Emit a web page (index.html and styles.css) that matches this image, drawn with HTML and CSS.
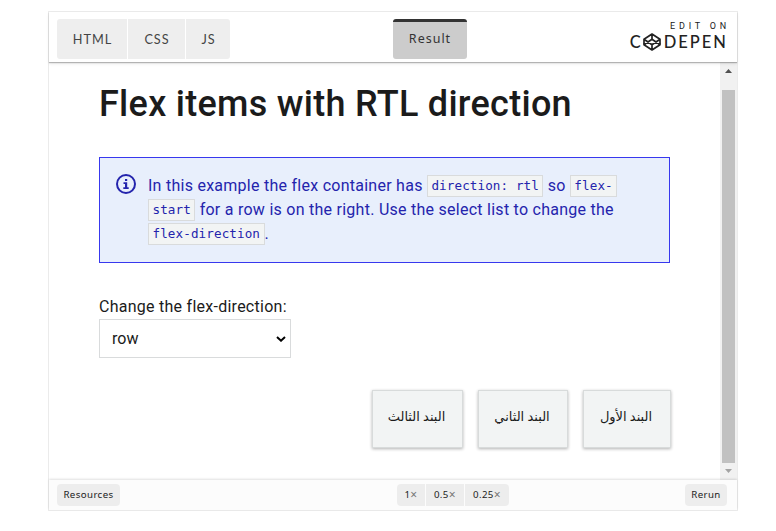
FILE: index.html
```html
<!DOCTYPE html>
<html lang="en">
<head>
<meta charset="utf-8">
<title>Flex items with RTL direction</title>
<link rel="stylesheet" href="styles.css">
</head>
<body>
<div class="embed">
  <header class="header">
    <nav class="tabs">
      <button class="tab html">HTML</button><button class="tab css">CSS</button><button class="tab js">JS</button>
    </nav>
    <button class="result">Result</button>
    <a class="brand">
      <span class="edit">EDIT ON</span>
      <span class="logo"><span>C</span><svg class="mark" viewBox="0 0 18 18" fill="none" stroke="#222" stroke-width="1.7" stroke-linejoin="round"><path d="M9 1L17 6.2V11.8L9 17L1 11.8V6.2ZM1 6.2L9 11.8L17 6.2M1 11.8L9 6.2L17 11.8M9 1V6.2M9 11.8V17"/></svg><span class="pen">DEPEN</span></span>
    </a>
  </header>
  <div class="view">
    <main class="page">
      <h1>Flex items with RTL direction</h1>
      <div class="note">
        <svg class="info" viewBox="0 0 20 20"><circle cx="10" cy="10" r="9" fill="none" stroke="#2424ad" stroke-width="2"/><path fill="#2424ad" d="M9 5h2.2v2H9zM7.5 8.3h3.7v5h1.5V15H7.3v-1.7H9V10H7.5z"/></svg>
        <p>In this example the flex container has <code>direction: rtl</code> so <code>flex-</code><br><code>start</code> for a row is on the right. Use the select list to change the<br><code>flex-direction</code>.</p>
      </div>
      <label class="label">Change the flex-direction:</label>
      <div class="select"><span>row</span><svg class="chevron" viewBox="0 0 10 6"><path d="M1 1l4 3.7L9 1" fill="none" stroke="#000" stroke-width="2"/></svg></div>
      <div class="items" dir="rtl" lang="ar">
        <div class="item first"><span>البند الأول</span></div>
        <div class="item second"><span>البند الثاني</span></div>
        <div class="item third"><span>البند الثالث</span></div>
      </div>
    </main>
    <div class="scrollbar">
      <svg class="arrow" viewBox="0 0 7 4"><path fill="#505050" d="M0 4L3.5 0L7 4z"/></svg>
      <div class="thumb"></div>
      <svg class="arrow" viewBox="0 0 7 4"><path fill="#a3a3a3" d="M0 0L3.5 4L7 0z"/></svg>
    </div>
  </div>
  <footer class="footer">
    <button class="small resources">Resources</button>
    <div class="zooms"><button class="small one">1<i>×</i></button><button class="small half">0.5<i>×</i></button><button class="small quarter">0.25<i>×</i></button></div>
    <button class="small rerun">Rerun</button>
  </footer>
</div>
</body>
</html>
```
FILE: styles.css
```css
* { box-sizing: border-box; }
body { margin: 0; background: #fff; font-family: Roboto, "Liberation Sans", sans-serif; }
button { border: 0; padding: 0; }
.embed { width: 690px; height: 500px; margin: 11px 0 0 48px; border: 1px solid #ebebeb; display: flex; flex-direction: column; }
.header { height: 50px; flex: none; display: grid; grid-template-columns: 336px 74px 1fr; padding: 7px 10px 0 8px; background: #fff; box-shadow: 0 1px 1px rgba(0,0,0,.25), 0 2px 3px rgba(0,0,0,.08); position: relative; }
.tabs { display: flex; gap: 1px; }
.tab, .result { height: 40px; font: 13px Lato, sans-serif; letter-spacing: 1px; color: #444; background: #eee; }
.tab { font-size: 12.7px; padding: 0 0 1px 1px; }
.html { width: 70px; border-radius: 3px 0 0 3px; }
.css { width: 57px; }
.js { width: 44px; border-radius: 0 3px 3px 0; }
.result { width: 74px; background: #ccc; color: #333; border-top: 3px solid #333; border-radius: 3px; font-family: "Noto Sans", sans-serif; font-size: 12.5px; padding-bottom: 4px; }
.brand { display: flex; flex-direction: column; align-items: flex-end; color: #222; }
.edit { font: 400 9px/11px Roboto, sans-serif; letter-spacing: 3.8px; margin: 2px -3px 0 0; }
.logo { display: flex; align-items: center; height: 20px; font: 500 16.5px/20px Lato, sans-serif; letter-spacing: 2px; }
.mark { width: 18px; height: 18px; margin: 0 3px 0 0; }
.pen { margin-right: -1px; }
.view { height: 418px; flex: none; display: flex; overflow: hidden; }
.page { flex: 1; padding: 19px 50px 0; color: #1b1b1b; }
h1 { margin: 0 0 30px; font: 500 36px/46px Roboto, sans-serif; letter-spacing: .28px; white-space: nowrap; }
.note { width: 571px; height: 106px; display: flex; padding: 16px; border: 1px solid #3838ee; background: #e8effc; color: #2424ad; }
.info { width: 20px; height: 20px; flex: none; margin-right: 12px; }
.note p { margin: 0; font-size: 16px; line-height: 24px; letter-spacing: .26px; white-space: nowrap; }
code { display: inline-block; height: 22px; line-height: 20px; padding: 0 3.5px; border: 1px solid #d9dbdc; background: #f2f4f4; font-family: "DejaVu Sans Mono", monospace; font-size: 12.6px; letter-spacing: .1px; vertical-align: top; margin-top: 1px; }
.label { display: block; margin-top: 32px; font-size: 16px; line-height: 24px; letter-spacing: .26px; }
.select { width: 192px; height: 39px; display: flex; align-items: center; justify-content: space-between; padding: 0 4px 0 12px; border: 1px solid #d9dbdc; font-size: 16px; }
.chevron { width: 10px; height: 6px; }
.items { display: flex; gap: 15px; margin: 32px -1px 0 0; }
.item { height: 58px; display: flex; align-items: center; justify-content: center; border: 1px solid #d8dbdb; background: #f2f4f4; box-shadow: 0 1px 3px rgba(0,0,0,.3); font: 13px "Liberation Serif", "DejaVu Sans", serif; white-space: nowrap; padding: 0 2px 4px 0; }
.first { width: 88px; }
.second { width: 90px; }
.third { width: 91px; }
.scrollbar { width: 17px; background: #f1f1f1; display: flex; flex-direction: column; align-items: center; padding-top: 7px; }
.arrow { width: 7px; height: 4px; flex: none; }
.thumb { width: 13px; height: 373px; flex: none; margin: 17px 0 6px; background: #c1c1c1; }
.footer { flex: 1; display: grid; grid-template-columns: 340px 112px 1fr; padding: 4px 10px 0 8px; background: #fcfcfc; box-shadow: 0 -1px 2px rgba(0,0,0,.12); position: relative; }
.small { height: 22px; font: 9.7px "Noto Sans", sans-serif; letter-spacing: .4px; background: #ededed; color: #222; border-radius: 4px; padding-bottom: 1px; }
.small i { font-style: normal; font-size: 12px; line-height: 10px; vertical-align: -1px; color: #777; }
.resources { width: 63px; }
.zooms { display: flex; gap: 1px; }
.one { width: 28px; border-radius: 4px 0 0 4px; }
.half { width: 38px; border-radius: 0; }
.quarter { width: 44px; border-radius: 0 4px 4px 0; }
.rerun { width: 42px; justify-self: end; }
```
